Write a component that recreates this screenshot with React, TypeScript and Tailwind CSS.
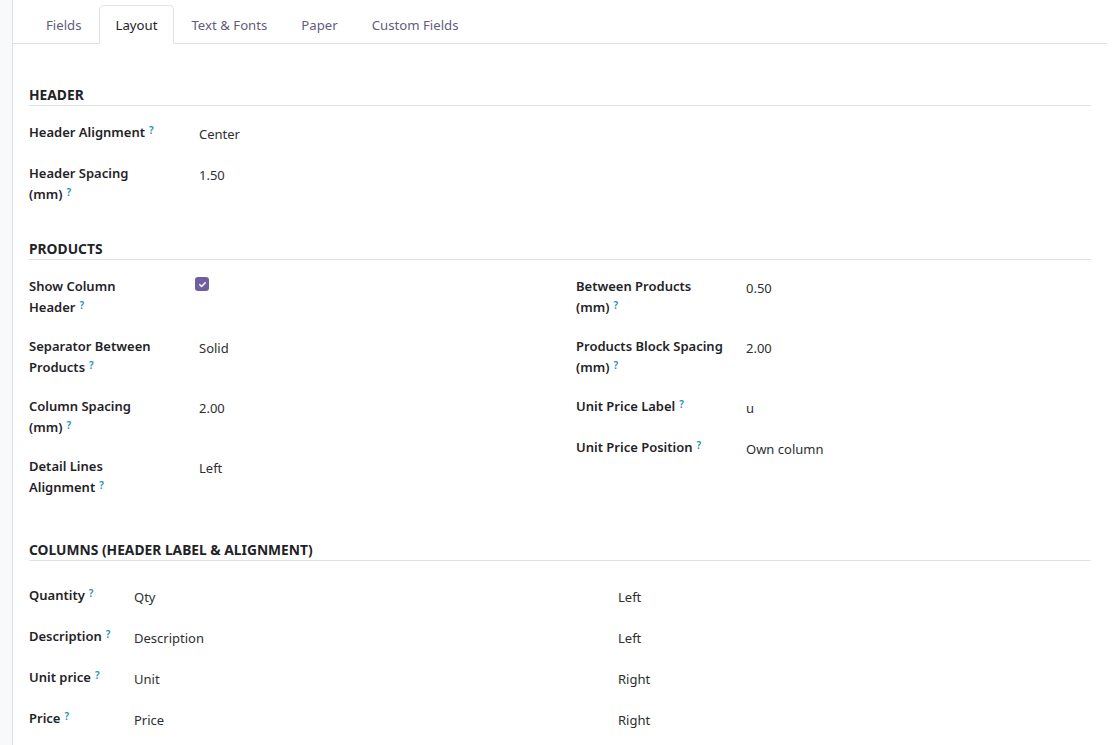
import type { ReactNode } from 'react';

const tabs = ['Fields', 'Layout', 'Text & Fonts', 'Paper', 'Custom Fields'];

const font = { fontFamily: '"Noto Sans", "Open Sans", sans-serif' };

function Help() {
  return <sup className="relative -top-[3px] ml-[4px] text-[10px] font-semibold text-[#1e8db8]">?</sup>;
}

function SectionTitle({ children }: { children: ReactNode }) {
  return (
    <div className="border-b border-[#dee2e6] text-[13.8px] leading-[20px] font-bold uppercase text-[#1f2328]">
      {children}
    </div>
  );
}

function Row({ label, children }: { label: ReactNode; children?: ReactNode }) {
  return (
    <div className="flex items-start pb-[18px]">
      <div className="w-[166px] shrink-0 text-[13px] leading-[21px] font-semibold text-[#1f2328]">{label}</div>
      <div className="min-h-[23px] pt-[2px] text-[13px] leading-[21px] text-[#2b2f33]">{children}</div>
    </div>
  );
}

function Value({ children }: { children: ReactNode }) {
  return <span className="pl-1">{children}</span>;
}

function Check() {
  return (
    <span className="mt-[-1px] flex h-[14px] w-[14px] items-center justify-center rounded-[3px] bg-[#6f5f9e]">
      <svg width="9" height="9" viewBox="0 0 10 10" fill="none">
        <path d="M2 5.2l2 2 4-4.2" stroke="white" strokeWidth="1.7" strokeLinecap="round" strokeLinejoin="round" />
      </svg>
    </span>
  );
}

const columns = [
  { label: 'Quantity', header: 'Qty', align: 'Left' },
  { label: 'Description', header: 'Description', align: 'Left' },
  { label: 'Unit price', header: 'Unit', align: 'Right' },
  { label: 'Price', header: 'Price', align: 'Right' },
];

export default function App() {
  return (
    <div className="flex h-screen bg-white" style={font}>
      <div className="w-[13px] shrink-0 border-r border-[#dee2e6] bg-[#f8f9fa]" />
      <div className="flex-1 pr-2">
        <div className="flex border-b border-[#dee2e6] pl-4 pt-[5px]">
          {tabs.map((t) => (
            <div
              key={t}
              className={
                t === 'Layout'
                  ? '-mb-px h-[39px] rounded-t-[5px] border border-b-white border-[#dee2e6] bg-white px-4 pt-[9px] text-[13.2px] leading-[21px] text-[#1f2328]'
                  : 'h-[38px] border border-transparent px-4 pt-[9px] text-[13.2px] leading-[21px] text-[#5f5c80]'
              }
            >
              {t}
            </div>
          ))}
        </div>

        <div className="pl-4 pr-4">
          <div className="pt-[41px]">
            <SectionTitle>Header</SectionTitle>
            <div className="pt-[16px]">
              <Row
                label={
                  <>
                    Header Alignment<Help />
                  </>
                }
              >
                <Value>Center</Value>
              </Row>
              <Row
                label={
                  <>
                    Header Spacing
                    <br />
                    (mm)<Help />
                  </>
                }
              >
                <Value>1.50</Value>
              </Row>
            </div>
          </div>

          <div className="pt-[16px]">
            <SectionTitle>Products</SectionTitle>
            <div className="grid grid-cols-2 pt-[16px]">
              <div>
                <Row
                  label={
                    <>
                      Show Column
                      <br />
                      Header<Help />
                    </>
                  }
                >
                  <Check />
                </Row>
                <Row
                  label={
                    <>
                      Separator Between
                      <br />
                      Products<Help />
                    </>
                  }
                >
                  <Value>Solid</Value>
                </Row>
                <Row
                  label={
                    <>
                      Column Spacing
                      <br />
                      (mm)<Help />
                    </>
                  }
                >
                  <Value>2.00</Value>
                </Row>
                <Row
                  label={
                    <>
                      Detail Lines
                      <br />
                      Alignment<Help />
                    </>
                  }
                >
                  <Value>Left</Value>
                </Row>
              </div>
              <div className="pl-4">
                <Row
                  label={
                    <>
                      Between Products
                      <br />
                      (mm)<Help />
                    </>
                  }
                >
                  <Value>0.50</Value>
                </Row>
                <Row
                  label={
                    <>
                      Products Block Spacing
                      <br />
                      (mm)<Help />
                    </>
                  }
                >
                  <Value>2.00</Value>
                </Row>
                <Row
                  label={
                    <>
                      Unit Price Label<Help />
                    </>
                  }
                >
                  <Value>u</Value>
                </Row>
                <Row
                  label={
                    <>
                      Unit Price Position<Help />
                    </>
                  }
                >
                  <Value>Own column</Value>
                </Row>
              </div>
            </div>
          </div>

          <div className="pt-[24px]">
            <SectionTitle>Columns (Header Label &amp; Alignment)</SectionTitle>
            <div className="pt-[24px]">
              {columns.map((c) => (
                <div key={c.label} className="grid grid-cols-[101px_484px_1fr] pb-[18px] text-[13px] leading-[21px]">
                  <div className="font-semibold text-[#1f2328]">
                    {c.label}
                    <Help />
                  </div>
                  <div className="pt-[2px] pl-1 text-[#2b2f33]">{c.header}</div>
                  <div className="pt-[2px] pl-1 text-[#2b2f33]">{c.align}</div>
                </div>
              ))}
            </div>
          </div>
        </div>
      </div>
    </div>
  );
}
